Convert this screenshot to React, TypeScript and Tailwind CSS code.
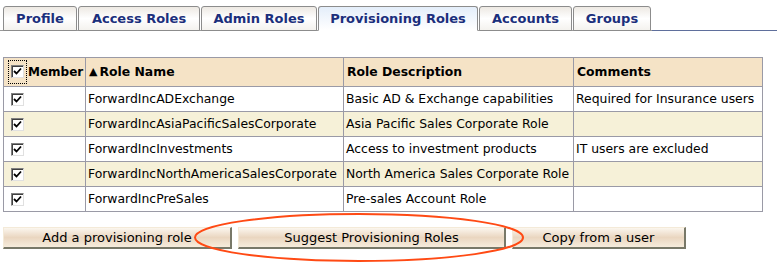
import React from 'react';

const tabs = [
  { label: 'Profile', w: 'w-[74px]' },
  { label: 'Access Roles', w: 'w-[122px]' },
  { label: 'Admin Roles', w: 'w-[116px]' },
  { label: 'Provisioning Roles', w: 'w-[160px]', active: true },
  { label: 'Accounts', w: 'w-[93px]' },
  { label: 'Groups', w: 'w-[78px]' },
];

const rows = [
  { name: 'ForwardIncADExchange', desc: 'Basic AD & Exchange capabilities', comment: 'Required for Insurance users' },
  { name: 'ForwardIncAsiaPacificSalesCorporate', desc: 'Asia Pacific Sales Corporate Role', comment: '' },
  { name: 'ForwardIncInvestments', desc: 'Access to investment products', comment: 'IT users are excluded' },
  { name: 'ForwardIncNorthAmericaSalesCorporate', desc: 'North America Sales Corporate Role', comment: '' },
  { name: 'ForwardIncPreSales', desc: 'Pre-sales Account Role', comment: '' },
];

const CheckBox = () => (
  <span className="inline-flex items-center justify-center w-[13px] h-[13px] bg-white border border-t-[#808080] border-l-[#808080] border-b-[#e0e0e0] border-r-[#e0e0e0] shadow-[inset_1px_1px_0_#404040]">
    <svg width="9" height="9" viewBox="0 0 9 9">
      <path d="M1 4 L3.5 6.5 L8 1.5" stroke="#000" strokeWidth="1.8" fill="none" />
    </svg>
  </span>
);

const Button = ({ label, w }: { label: string; w: string }) => (
  <button
    className={`${w} h-[22px] text-[13px] text-black bg-gradient-to-b from-[#fbf6ee] via-[#ead6c0] to-[#f6ecdc] border border-t-[#f4ead8] border-l-[#f4ead8] border-b-2 border-r-2 border-b-[#787868] border-r-[#787868]`}
  >
    {label}
  </button>
);

export default function App() {
  return (
    <div className="relative w-[777px] h-[264px] bg-white font-['DejaVu_Sans',Verdana,sans-serif]">
      <div className="flex items-end pt-[6px] pl-[3px] gap-[1px] border-b border-[#9a9a9a]">
        {tabs.map((t) => (
          <div
            key={t.label}
            className={`${t.w} h-[25px] -mb-px flex items-center justify-center rounded-t-[3px] border border-[#8c8c8c] text-[13px] font-bold text-[#1b2f7c] ${
              t.active
                ? 'bg-gradient-to-b from-[#e4eefa] to-white border-b-white'
                : 'bg-gradient-to-b from-[#ede9e3] via-white to-[#f4f2ee]'
            }`}
          >
            {t.label}
          </div>
        ))}
        <div className="flex-1 h-[1px] -mb-px bg-[#5f6f9c]" />
      </div>

      <table className="ml-[3px] mt-[26px] w-[759px] table-fixed border-collapse text-[12.4px] text-black">
        <colgroup>
          <col className="w-[82px]" />
          <col className="w-[258px]" />
          <col className="w-[230px]" />
          <col className="w-[189px]" />
        </colgroup>
        <thead>
          <tr className="h-[29px] bg-[#f5e3c6] font-bold text-left">
            <th className="border border-[#9a9aa6] pl-[4px] pr-0 whitespace-nowrap">
              <div className="flex items-center gap-[1px] text-[12px]">
                <span className="border border-dotted border-black p-[2px]">
                  <CheckBox />
                </span>
                <span>Member</span>
              </div>
            </th>
            <th className="border border-[#9a9aa6] px-[3px]">
              <span className="text-[11px] mr-[2px] align-[1px]">▲</span>Role Name
            </th>
            <th className="border border-[#9a9aa6] px-[3px]">Role Description</th>
            <th className="border border-[#9a9aa6] px-[3px]">Comments</th>
          </tr>
        </thead>
        <tbody>
          {rows.map((r, i) => (
            <tr key={r.name} className={`h-[25px] ${i % 2 ? 'bg-[#f6f1d8]' : 'bg-white'}`}>
              <td className="border border-[#9a9aa6] pl-[7px]">
                <div className="flex items-center">
                  <CheckBox />
                </div>
              </td>
              <td className="border border-[#9a9aa6] px-[2px] whitespace-nowrap">{r.name}</td>
              <td className="border border-[#9a9aa6] px-[2px] whitespace-nowrap">{r.desc}</td>
              <td className="border border-[#9a9aa6] px-[2px] whitespace-nowrap">{r.comment}</td>
            </tr>
          ))}
        </tbody>
      </table>

      <div className="flex gap-[6px] ml-[3px] mt-[15px]">
        <Button label="Add a provisioning role" w="w-[229px]" />
        <Button label="Suggest Provisioning Roles" w="w-[268px]" />
        <Button label="Copy from a user" w="w-[174px]" />
      </div>

      <svg className="absolute left-[192px] top-[212px]" width="334" height="51" viewBox="0 0 334 51">
        <ellipse cx="167" cy="25.5" rx="164" ry="23.5" fill="none" stroke="#ff4a14" strokeWidth="2" />
      </svg>
    </div>
  );
}
